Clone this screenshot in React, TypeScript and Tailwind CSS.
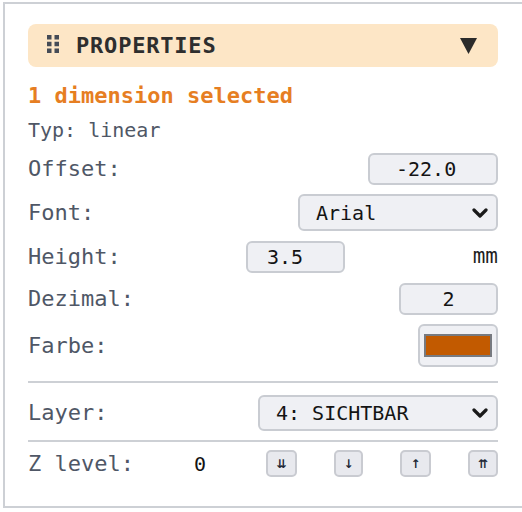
import React from 'react';

const mono = "font-['DejaVu_Sans_Mono','Liberation_Mono',monospace]";

function Grip() {
  return (
    <svg width="12" height="18" viewBox="0 0 12 18" className="mt-[-4px] shrink-0">
      {[0, 7.5].map((x) =>
        [0, 6.75, 13.5].map((y) => (
          <rect key={`${x}-${y}`} x={x} y={y} width="4.5" height="4.5" fill="#454b56" />
        )),
      )}
    </svg>
  );
}

function Chevron() {
  return (
    <svg width="16" height="10" viewBox="0 0 16 10" className="shrink-0">
      <polyline points="2,2 8,8 14,2" fill="none" stroke="#1a1a1a" strokeWidth="3.2" strokeLinecap="round" strokeLinejoin="round" />
    </svg>
  );
}

function Label({ children, className = '' }: { children: React.ReactNode; className?: string }) {
  return <span className={`text-[22px] leading-[26px] text-[#4f5766] ${className}`}>{children}</span>;
}

const field = 'rounded-[6px] border-2 border-[#c9ccd2] bg-[#eff0f4] text-[20px] text-[#141414] flex items-center';

function ZButton({ glyph, w }: { glyph: string; w: string }) {
  return (
    <div
      className={`${w} h-[27px] rounded-[5px] border-2 border-[#c9cbd1] bg-[#e8e9ee] flex items-center justify-center text-[12px] font-bold text-[#1f2937] font-['DejaVu_Sans',sans-serif]`}
    >
      {glyph}
    </div>
  );
}

export default function App() {
  return (
    <div className="w-[522px] h-[512px] bg-white overflow-hidden pt-[2px]">
      <div className={`ml-[3px] h-[506px] border-l-2 border-t-2 border-b-2 border-[#cdd0d5] pl-[23px] pr-[24px] pt-[20px] ${mono}`}>
        {/* header */}
        <div className="h-[43px] rounded-[8px] bg-[#fde6c6] flex items-center pl-[19px] pr-[21px]">
          <Grip />
          <span className="ml-[17px] text-[22px] font-bold tracking-[0.8px] text-[#2e2e2e]">PROPERTIES</span>
          <svg width="17" height="16" viewBox="0 0 17 16" className="ml-auto">
            <polygon points="0,0 17,0 8.5,16" fill="#2b2b2b" />
          </svg>
        </div>

        <div className="mt-[16px] text-[22px] leading-[26px] font-bold text-[#e67e22]">1 dimension selected</div>
        <div className="mt-[9px] text-[20px] leading-[24px] text-[#4f5766]">Typ: linear</div>

        {/* Offset */}
        <div className="mt-[11px] h-[32px] flex items-center justify-between">
          <Label>Offset:</Label>
          <div className={`${field} w-[130px] h-full pl-[26px]`}>-22.0</div>
        </div>

        {/* Font */}
        <div className="mt-[9px] h-[37px] flex items-center justify-between">
          <Label>Font:</Label>
          <div className={`${field} w-[200px] h-full pl-[16px] pr-[8px] justify-between`}>
            <span>Arial</span>
            <Chevron />
          </div>
        </div>

        {/* Height */}
        <div className="mt-[10px] h-[32px] flex items-center">
          <Label className="w-[218px]">Height:</Label>
          <div className={`${field} w-[99px] h-full pl-[19px]`}>3.5</div>
          <span className="ml-auto text-[21px] text-[#1f1f1f]">mm</span>
        </div>

        {/* Dezimal */}
        <div className="mt-[10px] h-[32px] flex items-center justify-between">
          <Label>Dezimal:</Label>
          <div className={`${field} w-[99px] h-full justify-center`}>2</div>
        </div>

        {/* Farbe */}
        <div className="mt-[9px] h-[43px] flex items-center justify-between">
          <Label>Farbe:</Label>
          <div className="w-[80px] h-full rounded-[6px] border-2 border-[#c9ccd2] bg-[#eff0f4] flex items-center justify-center">
            <div className="w-[68px] h-[23px] border-2 border-[#777a80] bg-[#c25a00]" />
          </div>
        </div>

        <div className="mt-[14px] h-[2px] bg-[#cdd0d5]" />

        {/* Layer */}
        <div className="mt-[12px] h-[36px] flex items-center justify-between">
          <Label>Layer:</Label>
          <div className={`${field} w-[240px] h-full pl-[16px] pr-[8px] justify-between`}>
            <span>4: SICHTBAR</span>
            <Chevron />
          </div>
        </div>

        <div className="mt-[9px] h-[2px] bg-[#cdd0d5]" />

        {/* Z level */}
        <div className="mt-[8px] h-[27px] flex items-center">
          <Label className="w-[166px]">Z level:</Label>
          <span className="text-[20px] text-[#141414]">0</span>
          <div className="ml-auto w-[232px] flex justify-between">
            <ZButton glyph="⇊" w="w-[31px]" />
            <ZButton glyph="↓" w="w-[29px]" />
            <ZButton glyph="↑" w="w-[31px]" />
            <ZButton glyph="⇈" w="w-[30px]" />
          </div>
        </div>
      </div>
    </div>
  );
}
